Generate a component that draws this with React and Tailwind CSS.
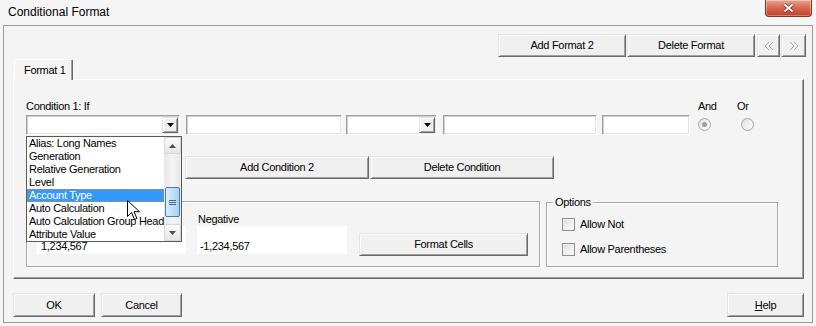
import React from "react";

const raised =
  "bg-[#f0f0f0] border border-t-[#e3e3e3] border-l-[#e3e3e3] border-r-[#696969] border-b-[#696969] shadow-[inset_1px_1px_0_#ffffff,inset_-1px_-1px_0_#a0a0a0]";
const sunken =
  "bg-white border border-t-[#a0a0a0] border-l-[#a0a0a0] border-r-[#ffffff] border-b-[#ffffff] shadow-[inset_1px_1px_0_#d0d0d0,inset_-1px_-1px_0_#e3e3e3]";

function Button({ className = "", children }) {
  return (
    <div className={`flex items-center justify-center ${raised} ${className}`}>
      {children}
    </div>
  );
}

function DownArrow() {
  return (
    <svg width="7" height="4" viewBox="0 0 7 4">
      <path d="M0 0h7L3.5 4z" fill="#000" />
    </svg>
  );
}

function Combo({ className = "" }) {
  return (
    <div className={`flex justify-end h-[20px] p-[1px] ${sunken} ${className}`}>
      <div className={`w-[16px] flex items-center justify-center ${raised}`}>
        <DownArrow />
      </div>
    </div>
  );
}

function TextBox({ className = "" }) {
  return <div className={`h-[20px] ${sunken} ${className}`} />;
}

function Radio({ checked }) {
  return (
    <div className="w-[13px] h-[13px] rounded-full border border-[#a8a8a8] bg-linear-to-br from-[#dedede] to-white flex items-center justify-center">
      {checked && <div className="w-[5px] h-[5px] rounded-full bg-[#9c9c9c]" />}
    </div>
  );
}

function Checkbox() {
  return (
    <div className="w-[13px] h-[13px] border border-[#8f8f8f] bg-linear-to-br from-[#dcdcdc] to-white shadow-[inset_0_0_0_1px_#f0f0f0]" />
  );
}

function Chevrons({ dir }) {
  return (
    <svg width="10" height="10" viewBox="0 0 10 10">
      <path
        d={dir === "left" ? "M5 1L1 5l4 4M9 1L5 5l4 4" : "M1 1l4 4-4 4M5 1l4 4-4 4"}
        stroke="#a8a8a8"
        fill="none"
      />
    </svg>
  );
}

const items = [
  "Alias: Long Names",
  "Generation",
  "Relative Generation",
  "Level",
  "Account Type",
  "Auto Calculation",
  "Auto Calculation Group Heading",
  "Attribute Value",
];

function DropList() {
  return (
    <div className="absolute left-[12px] top-[56px] w-[156px] h-[106px] border border-[#5a5a5a] bg-white flex z-20">
      <div className="flex-1 overflow-hidden">
        {items.map((item) =>
          item === "Account Type" ? (
            <div
              key={item}
              className="h-[13px] leading-[11px] pl-[1px] whitespace-nowrap bg-[#3399ff] text-white border border-dotted border-[#c88a3c]"
            >
              {item}
            </div>
          ) : (
            <div key={item} className="h-[13px] leading-[13px] pl-[2px] whitespace-nowrap">
              {item}
            </div>
          )
        )}
      </div>
      <div className="w-[17px] flex flex-col bg-linear-to-r from-[#e8e8e8] via-[#f4f4f4] to-[#e8e8e8]">
        <div className="h-[17px] flex items-center justify-center border border-[#d6d6d6] rounded-[2px] bg-linear-to-b from-[#fafafa] to-[#e6e6e6]">
          <svg width="7" height="4" viewBox="0 0 7 4">
            <path d="M0 4h7L3.5 0z" fill="#4d4d4d" />
          </svg>
        </div>
        <div className="flex-1 pt-[33px] px-[1px]">
          <div className="h-[30px] rounded-[2px] border border-[#3c7fb1] bg-linear-to-r from-[#dcecfc] to-[#a9d0f2] flex flex-col items-center justify-center gap-[1px]">
            <div className="w-[7px] h-[1px] bg-[#3d6a91]" />
            <div className="w-[7px] h-[1px] bg-[#3d6a91]" />
            <div className="w-[7px] h-[1px] bg-[#3d6a91]" />
          </div>
        </div>
        <div className="h-[17px] flex items-center justify-center border border-[#d6d6d6] rounded-[2px] bg-linear-to-b from-[#fafafa] to-[#e6e6e6]">
          <svg width="7" height="4" viewBox="0 0 7 4">
            <path d="M0 0h7L3.5 4z" fill="#4d4d4d" />
          </svg>
        </div>
      </div>
    </div>
  );
}

export default function App() {
  return (
    <div className="relative w-[816px] h-[326px] overflow-hidden bg-[#f5f5f5] text-black font-['Liberation_Sans',Arial,sans-serif] text-[11px] tracking-[-0.3px]">
      {/* title bar */}
      <div className="flex justify-between h-[25px]">
        <div className="pl-[8px] pt-[5px] text-[12px] tracking-normal leading-[14px]">
          Conditional Format
        </div>
        <div className="mr-[4px] w-[47px] h-[17px] rounded-b-[4px] border border-t-0 border-[#8a3424] bg-linear-to-b from-[#e9a693] via-[#d4674f] to-[#c23d27] flex items-center justify-center shadow-[inset_0_0_0_1px_rgba(255,255,255,0.35)]">
          <svg width="11" height="10" viewBox="0 0 11 10">
            <path d="M1.5 1.5l8 7M9.5 1.5l-8 7" stroke="#6e2a1e" strokeWidth="3" />
            <path d="M1.5 1.5l8 7M9.5 1.5l-8 7" stroke="#ffffff" strokeWidth="1.8" />
          </svg>
        </div>
      </div>

      {/* frame */}
      <div className="mx-[3px] h-[298px] border border-[#9c9c9c] bg-[#f4f4f4] flex flex-col">
        <div className="flex justify-end gap-[1px] mt-[8px] pr-[6px]">
          <Button className="w-[128px] h-[23px]">Add Format 2</Button>
          <Button className="w-[128px] h-[23px]">Delete Format</Button>
          <Button className="ml-[1px] w-[23px] h-[23px]">
            <Chevrons dir="left" />
          </Button>
          <Button className="w-[25px] h-[23px]">
            <Chevrons dir="right" />
          </Button>
        </div>

        {/* tab */}
        <div className="mt-[2px] ml-[10px] relative z-10 -mb-[1px] w-[59px] h-[21px] bg-[#f4f4f4] border border-b-0 border-t-white border-l-white border-r-[#696969] rounded-t-[2px] shadow-[inset_-1px_0_0_#a0a0a0] pl-[9px] pt-[4px] leading-[13px]">
          Format 1
        </div>

        {/* tab panel */}
        <div className="relative ml-[9px] w-[791px] h-[200px] border border-t-white border-l-white border-r-[#696969] border-b-[#696969] shadow-[inset_-1px_-1px_0_#a0a0a0] pl-[12px] pt-[19px]">
          <div className="flex leading-[14px] h-[14px]">
            <div className="w-[672px]">Condition 1: If</div>
            <div className="w-[39px]">And</div>
            <div>Or</div>
          </div>
          <div className="flex items-center mt-[2px]">
            <Combo className="w-[154px]" />
            <TextBox className="ml-[6px] w-[156px]" />
            <Combo className="ml-[4px] w-[91px]" />
            <TextBox className="ml-[6px] w-[154px]" />
            <TextBox className="ml-[5px] w-[88px]" />
            <div className="ml-[8px] -mt-[2px]">
              <Radio checked />
            </div>
            <div className="ml-[30px] -mt-[2px]">
              <Radio />
            </div>
          </div>

          <div className="flex gap-[1px] mt-[21px] ml-[159px]">
            <Button className="w-[184px] h-[23px]">Add Condition 2</Button>
            <Button className="w-[184px] h-[23px]">Delete Condition</Button>
          </div>

          <div className="flex mt-[22px]">
            {/* preview group */}
            <div className="w-[514px] h-[66px] border border-[#a8a8a8] shadow-[inset_1px_1px_0_#ffffff,1px_1px_0_#ffffff] pl-[10px] pt-[11px] flex">
              <div className="flex flex-col">
                <div className="h-[13px]" />
                <div className="w-[149px] h-[28px] bg-white flex items-end pl-[4px] pb-[1px] leading-[13px]">
                  1,234,567
                </div>
              </div>
              <div className="flex flex-col ml-[11px]">
                <div className="pl-[1px] leading-[13px] h-[13px]">Negative</div>
                <div className="w-[150px] h-[28px] bg-white flex items-end pl-[3px] pb-[1px] leading-[13px]">
                  -1,234,567
                </div>
              </div>
              <Button className="ml-[12px] mt-[20px] w-[169px] h-[23px]">Format Cells</Button>
            </div>

            {/* options group */}
            <div className="relative ml-[6px] mt-[1px] w-[232px] h-[65px] border border-[#a8a8a8] shadow-[inset_1px_1px_0_#ffffff,1px_1px_0_#ffffff] pl-[15px] pt-[15px]">
              <div className="absolute left-[6px] -top-[7px] px-[2px] bg-[#f4f4f4] leading-[13px]">
                Options
              </div>
              <div className="flex items-center h-[13px]">
                <Checkbox />
                <div className="ml-[5px]">Allow Not</div>
              </div>
              <div className="flex items-center h-[13px] mt-[12px]">
                <Checkbox />
                <div className="ml-[5px]">Allow Parentheses</div>
              </div>
            </div>
          </div>

          <DropList />
        </div>

        {/* bottom buttons */}
        <div className="flex mt-[14px] pl-[9px] pr-[8px]">
          <Button className="w-[82px] h-[24px] border-[#333333]">OK</Button>
          <Button className="ml-[6px] w-[81px] h-[24px]">Cancel</Button>
          <Button className="ml-auto w-[77px] h-[24px]">
            <span className="underline">H</span>elp
          </Button>
        </div>
      </div>

      {/* mouse pointer */}
      <svg
        className="absolute left-[127px] top-[200px] z-30"
        width="13"
        height="21"
        viewBox="0 0 13 21"
      >
        <path
          d="M0.5 0.5v16l4-4 3 7 2.5-1-3-6.8h5.5z"
          fill="#ffffff"
          stroke="#000000"
          strokeLinejoin="round"
        />
      </svg>
    </div>
  );
}
